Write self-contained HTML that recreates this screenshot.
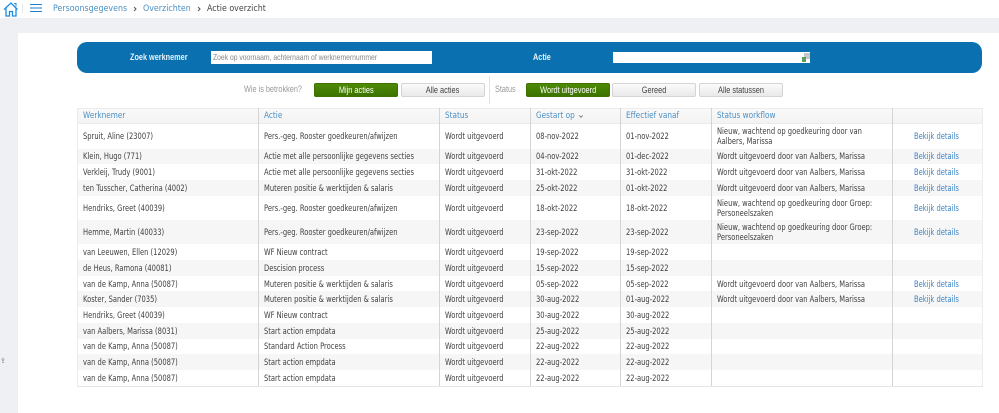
<!DOCTYPE html>
<html><head><meta charset="utf-8"><style>
html,body{margin:0;padding:0;width:999px;height:413px;overflow:hidden;background:#fff;font-family:"DejaVu Sans",sans-serif;font-size:8.4px;color:#3f3f3f}
.a{position:absolute;white-space:nowrap}
.s{transform:scaleX(.81);transform-origin:left center}
.b{transform:scaleX(.88);transform-origin:left center}
.r{position:absolute;left:77px;width:906px}
.g{background:#f6f6f6}
.c{position:absolute;top:50%;transform:translateY(-50%) scaleX(.805);transform-origin:left center;line-height:10px;white-space:nowrap}
.c1{left:6px}.c2{left:187px}.c3{left:368px}.c4{left:458.5px}.c5{left:548.5px}.c6{left:640px}.c7{left:837px;color:#3d85c6}
.v{position:absolute;top:107.5px;height:278px;width:1px;background:#d4d4d4}
.btn{position:absolute;top:82.5px;height:14px;line-height:13px;width:84px;text-align:center;border-radius:2px;box-sizing:border-box;font-family:"Liberation Sans",sans-serif;font-size:9px;background:linear-gradient(#fbfbfb,#e9e9e9);border:1px solid #d5d5d5;color:#444}
.btn span{display:inline-block;transform:scaleX(.82)}
.on{background:linear-gradient(#4f8a06,#3c7300);border-color:#3f7203;color:#fff}
.c.h{color:#4a8fc4;transform:translateY(-50%) scaleX(.875)}
</style></head><body>
<div class="a" style="left:0;top:18px;width:999px;height:15px;background:#eef0f3"></div>
<div class="a" style="left:0;top:18px;width:18px;height:395px;background:#eef0f3"></div>

<svg class="a" style="left:3px;top:1px" width="16" height="16" viewBox="0 0 16 16" fill="none" stroke="#1b8ce0" stroke-width="1.3"><path d="M1 8.5L8 2l6.5 6.5"/><path d="M3 7.5V15h3.5v-4.5h3V15H13V7.5"/><path d="M11 2.5h2v3" stroke-width="1"/></svg>
<div class="a" style="left:22px;top:4px;width:1px;height:9px;background:#e6e6e6"></div>
<svg class="a" style="left:30px;top:3px" width="12" height="10" viewBox="0 0 12 10" stroke="#1b7fce" stroke-width="1.1"><path d="M0 1.5h12M0 5h12M0 8.5h12"/></svg>
<div class="a b" style="left:52.5px;top:3px;font-size:9px;line-height:12px;color:#4a8fc4">Persoonsgegevens</div>
<svg class="a" style="left:133px;top:6px" width="4" height="6" viewBox="0 0 4 6" fill="none" stroke="#555" stroke-width="1"><path d="M1 1l2 2-2 2"/></svg>
<div class="a b" style="left:143px;top:3px;font-size:9px;line-height:12px;color:#4a8fc4">Overzichten</div>
<svg class="a" style="left:197px;top:6px" width="4" height="6" viewBox="0 0 4 6" fill="none" stroke="#555" stroke-width="1"><path d="M1 1l2 2-2 2"/></svg>
<div class="a b" style="left:207px;top:3px;font-size:9px;line-height:12px;color:#444">Actie overzicht</div>
<div class="a" style="left:0;top:357px;font-size:7px;line-height:8px;color:#777">⇪</div>

<div class="a" style="left:77px;top:42px;width:905px;height:30.5px;background:#0a70b0;border-radius:10px"></div>
<div class="a s" style="left:130px;top:52px;line-height:10px;color:#eaf3fa;font-family:'Liberation Sans',sans-serif;font-size:9px;font-weight:bold">Zoek werknemer</div>
<div class="a" style="left:211px;top:51px;width:221px;height:13px;background:#fff"></div>
<div class="a s" style="left:213px;top:51px;color:#888;font-family:'Liberation Sans',sans-serif;font-size:8.4px;line-height:13px">Zoek op voornaam, achternaam of werknemernummer</div>
<div class="a s" style="left:532.5px;top:52px;line-height:10px;color:#eaf3fa;font-family:'Liberation Sans',sans-serif;font-size:9px;font-weight:bold">Actie</div>
<div class="a" style="left:613px;top:52px;width:197px;height:10.5px;background:#fff"></div>
<div class="a" style="left:804px;top:53px;width:6px;height:6px;background:#c4c8cb"></div>
<div class="a" style="left:802px;top:57px;width:4px;height:5px;background:#5aa05a"></div>

<div class="a s" style="left:244px;top:84px;line-height:10px;color:#999;font-family:'Liberation Sans',sans-serif;font-size:9px">Wie is betrokken?</div>
<div class="btn on" style="left:314px"><span>Mijn acties</span></div>
<div class="btn" style="left:401px"><span>Alle acties</span></div>
<div class="a" style="left:489px;top:76px;width:1px;height:28px;background:#e2e2e2"></div>
<div class="a s" style="left:495px;top:84px;line-height:10px;color:#999;font-family:'Liberation Sans',sans-serif;font-size:9px">Status</div>
<div class="btn on" style="left:526px"><span>Wordt uitgevoerd</span></div>
<div class="btn" style="left:612px"><span>Gereed</span></div>
<div class="btn" style="left:699px"><span>Alle statussen</span></div>

<div class="r" style="top:107.5px;height:16px;background:linear-gradient(#fafafa,#f3f3f3);border-bottom:1px solid #e4e4e4;box-sizing:border-box;outline:1px solid #ececec;outline-offset:-1px">
<div class="c c1 h">Werknemer</div><div class="c c2 h">Actie</div><div class="c c3 h">Status</div><div class="c c4 h">Gestart op</div><svg class="a" style="left:502px;top:7px" width="4" height="3" viewBox="0 0 4 3" fill="none" stroke="#666" stroke-width=".8"><path d="M.3.5L2 2.3 3.7.5"/></svg><div class="c c5 h">Effectief vanaf</div><div class="c c6 h">Status workflow</div></div>

<div class="r" style="top:123.5px;height:25px"><div class="c c1">Spruit, Aline (23007)</div><div class="c c2">Pers.-geg. Rooster goedkeuren/afwijzen</div><div class="c c3">Wordt uitgevoerd</div><div class="c c4">08-nov-2022</div><div class="c c5">01-nov-2022</div><div class="c c6">Nieuw, wachtend op goedkeuring door van<br>Aalbers, Marissa</div><div class="c c7">Bekijk details</div></div>
<div class="r g" style="top:148.5px;height:15.75px"><div class="c c1">Klein, Hugo (771)</div><div class="c c2">Actie met alle persoonlijke gegevens secties</div><div class="c c3">Wordt uitgevoerd</div><div class="c c4">04-nov-2022</div><div class="c c5">01-dec-2022</div><div class="c c6">Wordt uitgevoerd door van Aalbers, Marissa</div><div class="c c7">Bekijk details</div></div>
<div class="r" style="top:164.25px;height:15.75px"><div class="c c1">Verkleij, Trudy (9001)</div><div class="c c2">Actie met alle persoonlijke gegevens secties</div><div class="c c3">Wordt uitgevoerd</div><div class="c c4">31-okt-2022</div><div class="c c5">31-okt-2022</div><div class="c c6">Wordt uitgevoerd door van Aalbers, Marissa</div><div class="c c7">Bekijk details</div></div>
<div class="r g" style="top:180px;height:15.75px"><div class="c c1">ten Tusscher, Catherina (4002)</div><div class="c c2">Muteren positie &amp; werktijden &amp; salaris</div><div class="c c3">Wordt uitgevoerd</div><div class="c c4">25-okt-2022</div><div class="c c5">01-okt-2022</div><div class="c c6">Wordt uitgevoerd door van Aalbers, Marissa</div><div class="c c7">Bekijk details</div></div>
<div class="r" style="top:195.75px;height:24.25px"><div class="c c1">Hendriks, Greet (40039)</div><div class="c c2">Pers.-geg. Rooster goedkeuren/afwijzen</div><div class="c c3">Wordt uitgevoerd</div><div class="c c4">18-okt-2022</div><div class="c c5">18-okt-2022</div><div class="c c6">Nieuw, wachtend op goedkeuring door Groep:<br>Personeelszaken</div><div class="c c7">Bekijk details</div></div>
<div class="r g" style="top:220px;height:24px"><div class="c c1">Hemme, Martin (40033)</div><div class="c c2">Pers.-geg. Rooster goedkeuren/afwijzen</div><div class="c c3">Wordt uitgevoerd</div><div class="c c4">23-sep-2022</div><div class="c c5">23-sep-2022</div><div class="c c6">Nieuw, wachtend op goedkeuring door Groep:<br>Personeelszaken</div><div class="c c7">Bekijk details</div></div>
<div class="r" style="top:244px;height:16px"><div class="c c1">van Leeuwen, Ellen (12029)</div><div class="c c2">WF Nieuw contract</div><div class="c c3">Wordt uitgevoerd</div><div class="c c4">19-sep-2022</div><div class="c c5">19-sep-2022</div></div>
<div class="r g" style="top:260px;height:15.7px"><div class="c c1">de Heus, Ramona (40081)</div><div class="c c2">Descision process</div><div class="c c3">Wordt uitgevoerd</div><div class="c c4">15-sep-2022</div><div class="c c5">15-sep-2022</div></div>
<div class="r" style="top:275.7px;height:15.7px"><div class="c c1">van de Kamp, Anna (50087)</div><div class="c c2">Muteren positie &amp; werktijden &amp; salaris</div><div class="c c3">Wordt uitgevoerd</div><div class="c c4">05-sep-2022</div><div class="c c5">05-sep-2022</div><div class="c c6">Wordt uitgevoerd door van Aalbers, Marissa</div><div class="c c7">Bekijk details</div></div>
<div class="r g" style="top:291.4px;height:15.7px"><div class="c c1">Koster, Sander (7035)</div><div class="c c2">Muteren positie &amp; werktijden &amp; salaris</div><div class="c c3">Wordt uitgevoerd</div><div class="c c4">30-aug-2022</div><div class="c c5">01-aug-2022</div><div class="c c6">Wordt uitgevoerd door van Aalbers, Marissa</div><div class="c c7">Bekijk details</div></div>
<div class="r" style="top:307.1px;height:15.8px"><div class="c c1">Hendriks, Greet (40039)</div><div class="c c2">WF Nieuw contract</div><div class="c c3">Wordt uitgevoerd</div><div class="c c4">30-aug-2022</div><div class="c c5">30-aug-2022</div></div>
<div class="r g" style="top:322.9px;height:15.7px"><div class="c c1">van Aalbers, Marissa (8031)</div><div class="c c2">Start action empdata</div><div class="c c3">Wordt uitgevoerd</div><div class="c c4">25-aug-2022</div><div class="c c5">25-aug-2022</div></div>
<div class="r" style="top:338.6px;height:15.8px"><div class="c c1">van de Kamp, Anna (50087)</div><div class="c c2">Standard Action Process</div><div class="c c3">Wordt uitgevoerd</div><div class="c c4">22-aug-2022</div><div class="c c5">22-aug-2022</div></div>
<div class="r g" style="top:354.4px;height:15.7px"><div class="c c1">van de Kamp, Anna (50087)</div><div class="c c2">Start action empdata</div><div class="c c3">Wordt uitgevoerd</div><div class="c c4">22-aug-2022</div><div class="c c5">22-aug-2022</div></div>
<div class="r" style="top:370.1px;height:15.7px"><div class="c c1">van de Kamp, Anna (50087)</div><div class="c c2">Start action empdata</div><div class="c c3">Wordt uitgevoerd</div><div class="c c4">22-aug-2022</div><div class="c c5">22-aug-2022</div></div>

<div class="a" style="left:77px;top:385.5px;width:906px;height:1px;background:#e4e4e4"></div>
<div class="v" style="left:77px;background:#ececec"></div>
<div class="v" style="left:258px"></div>
<div class="v" style="left:439px"></div>
<div class="v" style="left:530px"></div>
<div class="v" style="left:620px"></div>
<div class="v" style="left:710.5px"></div>
<div class="v" style="left:891.5px"></div>
<div class="v" style="left:981.5px;background:#ececec"></div>
</body></html>
